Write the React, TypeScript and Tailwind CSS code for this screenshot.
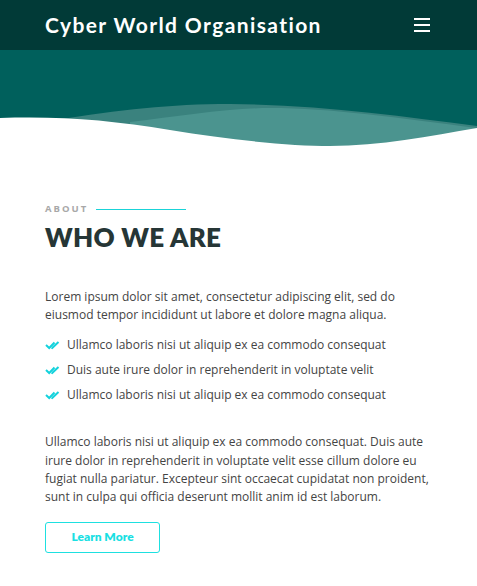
import React from 'react';

const items = [
    'Ullamco laboris nisi ut aliquip ex ea commodo consequat',
    'Duis aute irure dolor in reprehenderit in voluptate velit',
    'Ullamco laboris nisi ut aliquip ex ea commodo consequat',
];

function DoubleCheck() {
    return (
        <svg width="15" height="10" viewBox="0 0 15 10" fill="none" className="shrink-0">
            <path d="M1 5 L4.2 8 L9.5 2.5" stroke="#14d2dc" strokeWidth="2" />
            <path d="M6.5 7.6 L7.2 8 L13.5 2" stroke="#14d2dc" strokeWidth="2" />
        </svg>
    );
}

export default function App() {
    return (
        <div className="w-[477px] min-h-[586px] bg-white font-['Open_Sans',sans-serif]">
            {/* Header */}
            <header className="flex h-[50px] items-center justify-between bg-[#013a37] pl-[45px] pr-[47px]">
                <h1 className="font-['Lato',sans-serif] text-[21px] font-bold tracking-[1.4px] text-white">
                    Cyber World Organisation
                </h1>
                <button className="flex flex-col gap-[4.5px]">
                    <span className="block h-[1.5px] w-[16px] bg-white" />
                    <span className="block h-[1.5px] w-[16px] bg-white" />
                    <span className="block h-[1.5px] w-[16px] bg-white" />
                </button>
            </header>

            {/* Hero */}
            <div className="relative h-[96px] bg-[#00605c]">
                <svg
                    className="absolute inset-0"
                    width="477"
                    height="96"
                    viewBox="0 0 477 96"
                    preserveAspectRatio="none"
                >
                    <path
                        d="M55 70 C120 60 170 54 230 54 C320 55 400 66 477 76 L477 96 L55 96 Z"
                        fill="#3a827e"
                    />
                    <path
                        d="M130 72 C180 66 230 58 270 58 C330 58 400 68 477 78 L477 96 L130 96 Z"
                        fill="#4b948f"
                    />
                    <path
                        d="M0 68 C60 66 110 70 170 80 C230 90 290 96 330 96 C380 96 430 86 477 78 L477 96 L0 96 Z"
                        fill="#ffffff"
                    />
                </svg>
            </div>

            {/* About */}
            <section className="px-[45px] pt-[56px] pb-[34px]">
                <div className="flex items-center gap-[8px]">
                    <span className="text-[9.5px] font-bold tracking-[2px] text-[#a8a8a8]">ABOUT</span>
                    <span className="block h-px w-[90px] bg-[#1ad3d8]" />
                </div>
                <h2 className="mt-[4px] font-['Lato',sans-serif] text-[26px] leading-[34px] font-extrabold tracking-[0.3px] text-[#263636]">
                    WHO WE ARE
                </h2>

                <p className="mt-[34px] text-[12px] leading-[18px] text-[#444]">
                    Lorem ipsum dolor sit amet, consectetur adipiscing elit, sed do eiusmod tempor
                    incididunt ut labore et dolore magna aliqua.
                </p>

                <ul className="mt-[12px] flex flex-col gap-[7px]">
                    {items.map((t, i) => (
                        <li key={i} className="flex items-center gap-[7px] text-[12px] leading-[18px] text-[#444]">
                            <DoubleCheck />
                            {t}
                        </li>
                    ))}
                </ul>

                <p className="mt-[29px] text-[12px] leading-[18.4px] text-[#444]">
                    Ullamco laboris nisi ut aliquip ex ea commodo consequat. Duis aute irure dolor in
                    reprehenderit in voluptate velit esse cillum dolore eu fugiat nulla pariatur.
                    Excepteur sint occaecat cupidatat non proident, sunt in culpa qui officia deserunt
                    mollit anim id est laborum.
                </p>

                <button className="mt-[15px] flex h-[31px] w-[115px] items-center justify-center rounded-[3px] border border-[#1ee0e0] font-['Lato',sans-serif] text-[12px] font-extrabold text-[#1adfe3]">
                    Learn More
                </button>
            </section>
        </div>
    );
}
